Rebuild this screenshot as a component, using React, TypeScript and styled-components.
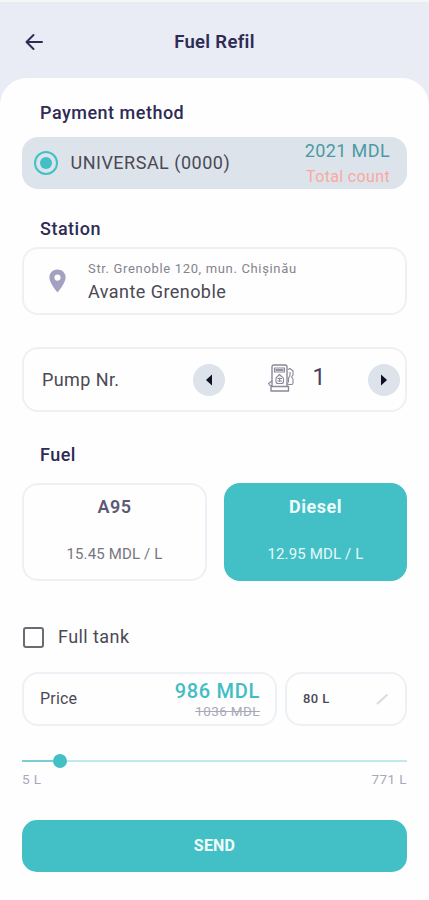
import React, { useState } from 'react';
import styled, { createGlobalStyle } from 'styled-components';

const teal = '#43c0c6';
const ink = '#2e2b54';
const line = '#edf0f4';

const GlobalStyle = createGlobalStyle`
  *, *::before, *::after { box-sizing: border-box; }
  body { margin: 0; background: #fefefe; font-family: Roboto, "Liberation Sans", sans-serif; }
  button { font: inherit; color: inherit; border: 0; padding: 0; cursor: pointer; }
`;

const Screen = styled.main`
  display: flex;
  flex-direction: column;
  width: 100%;
  max-width: 429px;
  height: 900px;
  overflow: hidden;
  background: #e9ecf4;
  border-top: 2px solid #f5f6f5;
`;

const Header = styled.header`
  display: grid;
  grid-template-columns: 24px 1fr 24px;
  align-items: center;
  flex: none;
  height: 76px;
  padding: 3px 22px 0;
  color: ${ink};
`;

const BackButton = styled.button`
  display: flex;
  width: 24px;
  height: 24px;
  background: none;
`;

const Sheet = styled.section`
  flex: 1;
  padding: 0 22px;
  border-radius: 27px 27px 0 0;
  background: #fefefe;
`;

type TextProps = { $size: number; $color?: string; $weight?: number; $spacing?: number; $line?: number };

const Text = styled.span<TextProps>`
  display: block;
  white-space: nowrap;
  font-size: ${(p) => p.$size}px;
  line-height: ${(p) => p.$line ?? 24}px;
  font-weight: ${(p) => p.$weight ?? 400};
  letter-spacing: ${(p) => p.$spacing ?? 0}px;
  color: ${(p) => p.$color ?? '#4a4954'};
`;

const Title = styled.h1`
  margin: 0;
  text-align: center;
  font-size: 18.5px;
  line-height: 24px;
  font-weight: 600;
  letter-spacing: 0.3px;
`;

const SectionTitle = styled.h2<{ $top: number; $bottom: number }>`
  margin: 0;
  padding: ${(p) => p.$top}px 0 ${(p) => p.$bottom}px 18px;
  font-size: 18px;
  line-height: 24px;
  font-weight: 500;
  letter-spacing: 0.5px;
  color: ${ink};
`;

const Card = styled.div<{ $height: number }>`
  display: flex;
  align-items: center;
  height: ${(p) => p.$height}px;
  border: 2px solid ${line};
  border-radius: 16px;
`;

const PaymentCard = styled(Card)`
  border: 0;
  background: #dce3eb;
  padding: 0 17px 0 12px;
`;

const Radio = styled.span`
  display: flex;
  align-items: center;
  justify-content: center;
  width: 24px;
  height: 24px;
  margin-right: 12.5px;
  border: 2px solid ${teal};
  border-radius: 50%;

  &::after {
    content: '';
    width: 12px;
    height: 12px;
    border-radius: 50%;
    background: ${teal};
  }
`;

const Amounts = styled.div`
  display: flex;
  flex-direction: column;
  align-items: flex-end;
  margin-left: auto;
  padding-top: 2px;
`;

const StationCard = styled(Card)`
  gap: 22px;
  padding-left: 25px;
`;

const PumpCard = styled(Card)`
  margin-top: 32px;
  padding: 0 5px 0 18px;
`;

const Stepper = styled.div`
  display: flex;
  align-items: center;
  justify-content: space-between;
  width: 207px;
  margin-left: auto;
`;

const StepButton = styled.button`
  display: flex;
  align-items: center;
  justify-content: center;
  width: 32px;
  height: 32px;
  border-radius: 50%;
  background: #dce3eb;
`;

const PumpValue = styled.div`
  display: flex;
  align-items: center;
  gap: 19px;
  padding-bottom: 4px;
`;

const FuelGrid = styled.div`
  display: grid;
  grid-template-columns: 185px 183px;
  justify-content: space-between;
`;

const FuelCard = styled.button<{ $active: boolean }>`
  display: flex;
  flex-direction: column;
  align-items: center;
  gap: 23px;
  height: 98px;
  padding-top: ${(p) => (p.$active ? 12 : 10)}px;
  border: ${(p) => (p.$active ? '0' : `2px solid ${line}`)};
  border-radius: 16px;
  background: ${(p) => (p.$active ? teal : '#fefefe')};
`;

const CheckRow = styled.label`
  display: flex;
  align-items: center;
  gap: 14px;
  height: 24px;
  margin-top: 44px;
  padding-left: 1px;
`;

const Checkbox = styled.input`
  appearance: none;
  width: 21px;
  height: 21px;
  margin: 0;
  border: 2px solid #6b6b72;
  border-radius: 3px;

  &:checked { background: ${teal}; border-color: ${teal}; }
`;

const PriceRow = styled.div`
  display: grid;
  grid-template-columns: 255px 1fr;
  gap: 8px;
  margin-top: 23px;
`;

const PriceCard = styled(Card)`
  padding: 0 15px 0 16px;
`;

const LitersCard = styled(Card)`
  justify-content: space-between;
  padding: 0 16px;
`;

const Track = styled.div`
  display: flex;
  align-items: center;
  height: 14px;
  margin-top: 28px;
`;

const TrackPart = styled.span<{ $filled?: boolean }>`
  width: ${(p) => (p.$filled ? '31px' : 'auto')};
  flex: ${(p) => (p.$filled ? 'none' : '1')};
  height: 2px;
  background: ${(p) => (p.$filled ? '#77cfd3' : '#c0e9ed')};
`;

const Thumb = styled.span`
  width: 14px;
  height: 14px;
  border-radius: 50%;
  background: ${teal};
`;

const RangeLabels = styled.div`
  display: flex;
  justify-content: space-between;
  padding-top: 1px;
`;

const SendButton = styled.button`
  display: block;
  width: 100%;
  height: 52px;
  margin-top: 31px;
  border-radius: 15px;
  background: ${teal};
`;

const BackIcon = () => (
  <svg width="24" height="24" viewBox="0 0 24 24" fill="none" stroke="currentColor" strokeWidth="2" strokeLinecap="round" strokeLinejoin="round">
    <path d="M20 12H4.500M11.500 5L4.500 12l7 7" />
  </svg>
);

const PinIcon = () => (
  <svg width="17" height="24" viewBox="0 0 17 24">
    <path fill="#a3a0c2" fillRule="evenodd" d="M8.500 0.500C3.900 0.500 0.400 4 0.400 8.500C0.400 14.300 8.500 23.500 8.500 23.500S16.600 14.300 16.600 8.500C16.600 4 13.100 0.500 8.500 0.500ZM8.500 5.500A3.100 3.100 0 1 1 8.500 11.700A3.100 3.100 0 0 1 8.500 5.500Z" />
  </svg>
);

const ArrowIcon = ({ direction }: { direction: 'left' | 'right' }) => (
  <svg width="8" height="12" viewBox="0 0 8 12">
    <path fill="#111124" d={direction === 'left' ? 'M7 .5v11L1 6z' : 'M1 .5v11L7 6z'} />
  </svg>
);

const PumpIcon = () => (
  <svg width="26" height="28" viewBox="0 0 26 28" fill="none" stroke="#8a889a" strokeWidth="1.100" strokeLinejoin="round">
    <path d="M4 22V3q0-2 2-2h11q2 0 2 2v19M3 22.500h17.500v4.500H3z" strokeWidth="1.400" />
    <path d="M6.500 4h10v4h-10z" />
    <path d="M7.500 6h8" strokeWidth="1.800" />
    <path d="M8 15q0-2 1.500-2.500l2-2 2 2Q15.500 13 15.500 15v2.500q0 2-2 2h-3.500q-2 0-2-2z" />
    <path d="M9.500 14.500h4.500M9.500 17h4.500M11.700 13.500v4.500" />
    <path d="M20 5.500l2-1 3 2.500v4l-1.500 2 1.500 2v4q0 1.500-1.500 1.500H21q-1.500 0-2-1M22 8v3.500l-1.500 2.500v4.500" />
    <path d="M4 17l-3.500 2.500 1.500 2h2" />
  </svg>
);

const EditIcon = () => (
  <svg width="14" height="14" viewBox="0 0 14 14">
    <path d="M2 12L12.500 2.500" fill="none" stroke="#dcdde1" strokeWidth="2.300" />
  </svg>
);

const fuels = [
  { name: 'A95', price: '15.45 MDL / L' },
  { name: 'Diesel', price: '12.95 MDL / L' },
];

export default function App() {
  const [pump, setPump] = useState(1);
  const [fuel, setFuel] = useState('Diesel');

  return (
    <>
      <GlobalStyle />
      <Screen>
        <Header>
          <BackButton aria-label="Back"><BackIcon /></BackButton>
          <Title>Fuel Refil</Title>
        </Header>
        <Sheet>
          <SectionTitle $top={23} $bottom={12}>Payment method</SectionTitle>
          <PaymentCard $height={52}>
            <Radio />
            <Text $size={18} $spacing={0.5}>UNIVERSAL (0000)</Text>
            <Amounts>
              <Text $size={18} $spacing={0.4} $line={26} $color="#4b9aa3">2021 MDL</Text>
              <Text $size={16} $spacing={0.35} $line={26} $color="#faa99f">Total count</Text>
            </Amounts>
          </PaymentCard>
          <SectionTitle $top={28} $bottom={6}>Station</SectionTitle>
          <StationCard $height={68}>
            <PinIcon />
            <div>
              <Text $size={13} $spacing={0.66} $line={21} $color="#84848e">Str. Grenoble 120, mun. Chișinău</Text>
              <Text $size={18} $spacing={0.45} $line={26}>Avante Grenoble</Text>
            </div>
          </StationCard>
          <PumpCard $height={65}>
            <Text $size={18} $spacing={0.4}>Pump Nr.</Text>
            <Stepper>
              <StepButton aria-label="Previous pump" onClick={() => setPump(Math.max(1, pump - 1))}><ArrowIcon direction="left" /></StepButton>
              <PumpValue>
                <PumpIcon />
                <Text $size={23} $color="#44425f">{pump}</Text>
              </PumpValue>
              <StepButton aria-label="Next pump" onClick={() => setPump(pump + 1)}><ArrowIcon direction="right" /></StepButton>
            </Stepper>
          </PumpCard>
          <SectionTitle $top={31} $bottom={16}>Fuel</SectionTitle>
          <FuelGrid>
            {fuels.map(({ name, price }) => {
              const active = fuel === name;
              return (
                <FuelCard key={name} $active={active} onClick={() => setFuel(name)}>
                  <Text $size={18} $spacing={0.5} $weight={active ? 700 : 600} $color={active ? '#effcfc' : '#5d5a75'}>{name}</Text>
                  <Text $size={15} $spacing={0.15} $color={active ? '#e6f9fa' : '#77767f'}>{price}</Text>
                </FuelCard>
              );
            })}
          </FuelGrid>
          <CheckRow>
            <Checkbox type="checkbox" />
            <Text $size={18} $spacing={0.42}>Full tank</Text>
          </CheckRow>
          <PriceRow>
            <PriceCard $height={54}>
              <Text $size={16} $spacing={0.2}>Price</Text>
              <Amounts>
                <Text $size={20} $spacing={0.7} $weight={500} $line={22} $color="#43bdc4">986 MDL</Text>
                <Text as="del" $size={13.5} $spacing={0.4} $line={18} $color="#a9a8ba">1036 MDL</Text>
              </Amounts>
            </PriceCard>
            <LitersCard $height={54}>
              <Text $size={13} $weight={500} $spacing={0.4}>80 L</Text>
              <EditIcon />
            </LitersCard>
          </PriceRow>
          <Track>
            <TrackPart $filled />
            <Thumb />
            <TrackPart />
          </Track>
          <RangeLabels>
            <Text $size={13.5} $spacing={0.4} $line={20} $color="#a9a8ba">5 L</Text>
            <Text $size={13.5} $spacing={0.4} $line={20} $color="#a9a8ba">771 L</Text>
          </RangeLabels>
          <SendButton>
            <Text $size={16} $weight={700} $spacing={0.2} $line={50} $color="#effcfc">SEND</Text>
          </SendButton>
        </Sheet>
      </Screen>
    </>
  );
}
